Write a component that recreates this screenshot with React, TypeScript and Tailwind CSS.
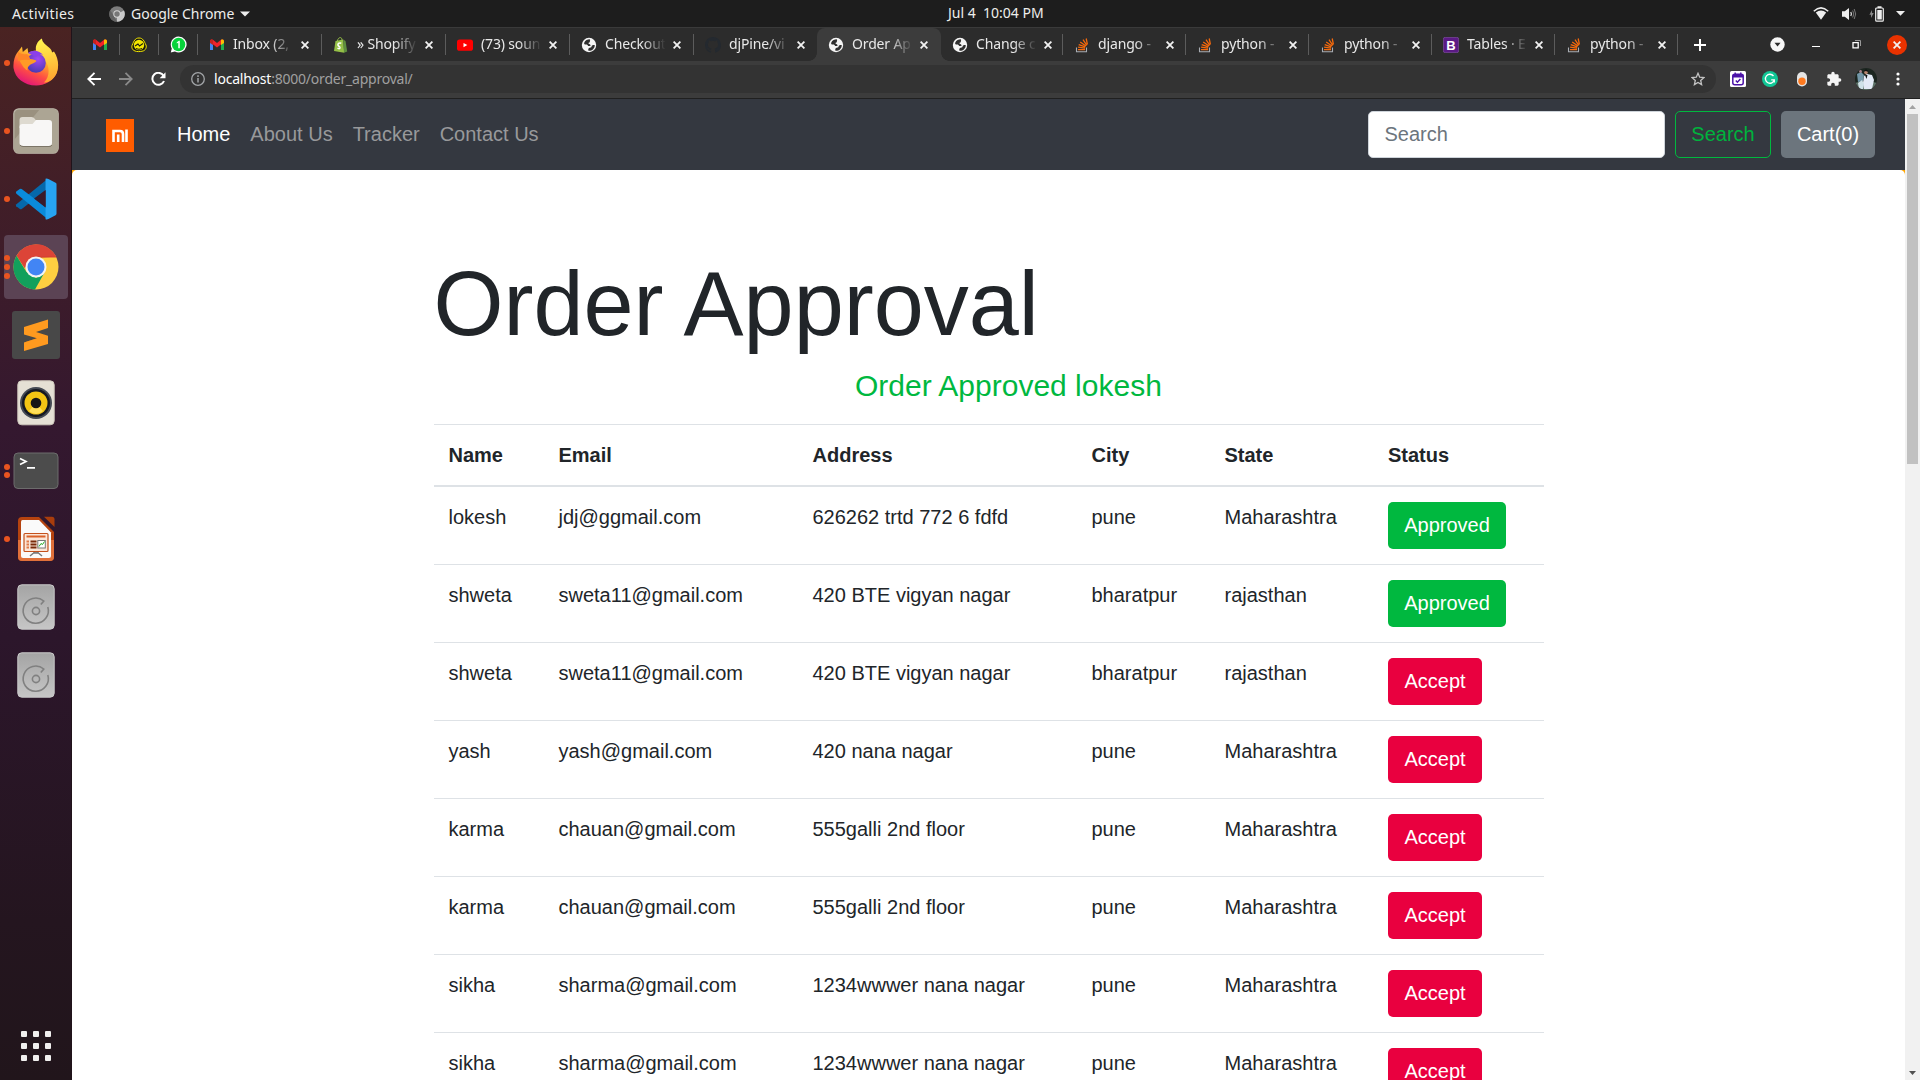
import React from "react";

type Favicon = "gmail" | "badge" | "whatsapp" | "shopify" | "youtube" | "globe" | "github" | "stack" | "bootstrap";

const Gmail = () => (
  <svg width="16" height="16" viewBox="0 0 16 16">
    <path d="M1 4v9h3V6z" fill="#4285f4" />
    <path d="M15 4v9h-3V6z" fill="#1fae4e" />
    <path d="M1 4.2C1 2.3 3 2 4.3 3L8 6l3.700-3C13 2 15 2.300 15 4.200L15 5 8 10.500 1 5z" fill="#f0232a" />
    <path d="M12 2.800C13.300 2 15 2.400 15 4.200V6l-3 2z" fill="#fbbc04" />
    <path d="M1 4.200C1 2.400 2.700 2 4 2.800V8L1 6z" fill="#c5221f" />
  </svg>
);

const Badge = () => (
  <svg width="16" height="16" viewBox="0 0 16 16" fill="none">
    <path d="M8 1C12 1 13 4 15 8c1 3-1 5.500-3 6-3 .800-6 .800-8 0C1 13 .300 10 1.200 8 3 4 4 1 8 1z" fill="#1b1b12" stroke="#f4e700" strokeWidth="1" />
    <circle cx="8" cy="8" r="5.200" fill="#f4e700" />
    <path d="M4 9l3-2 1.500 2L12 6.500M5 11.500c2 1 4 1 6 0" stroke="#1b1b12" strokeWidth="1.100" />
  </svg>
);

const Whatsapp = () => (
  <svg width="17" height="17" viewBox="0 0 17 17">
    <path d="M8.500.5a8 8 0 1 1-3.600 15.100L.8 16.500l1-4A8 8 0 0 1 8.500.5z" fill="#fff" />
    <circle cx="8.600" cy="8.500" r="6.700" fill="#07d33b" />
    <path d="M6.800 6.200L9 4.800h.8v7.400H8.300V6.600l-1.500.8z" fill="#fff" />
  </svg>
);

const Shopify = () => (
  <svg width="16" height="16" viewBox="0 0 16 16">
    <path d="M2.500 4l7.700-1.400 1 13.200L1 14z" fill="#95bf47" />
    <path d="M10.200 2.600l2.300 1.500 1.700 10.400-3.200 1.300z" fill="#5e8e3e" />
    <path d="M4.300 4C4.800 1.800 6 .6 7.300.6c1.200 0 1.700 1 1.700 2.600" fill="none" stroke="#95bf47" />
    <path d="M8.300 6.300C5.800 5.400 4.600 7 5 8.200c.4 1.200 2.200 1.400 2 2.700-.2 1-1.600.9-2.500.1" fill="none" stroke="#fff" strokeWidth="1.500" />
  </svg>
);

const Youtube = () => (
  <svg width="16" height="16" viewBox="0 0 16 16">
    <rect x="0" y="2.500" width="16" height="11.300" rx="2.600" fill="#f00" />
    <path d="M6.500 5.900v4.400l3.800-2.200z" fill="#fff" />
  </svg>
);

const Globe = () => (
  <svg width="16" height="16" viewBox="0 0 16 16">
    <circle cx="8" cy="8" r="7.200" fill="#f5f5f5" />
    <path d="M8.600 2.200c-2 0-4.400 1.100-5.300 3.300-.6 1.400.2 2 1.400 2 1.300-.1 2.300.5 2.400 1.500h2.300c.4-1-.2-1.700-1.200-2-.9-.3-.9-1.300 0-1.500 1.200-.2.300-1.700 1-2.600zM13.800 8.200c-1.500-.5-3 0-3.200 1.300-.2 1.200-1.700.9-2.600 1.600-.7.600-1 1.700-.5 2.700 3.500.3 6.300-2.400 6.300-5.600z" fill="#2f2f2f" />
  </svg>
);

const Github = () => (
  <svg width="16" height="16" viewBox="0 0 16 16" fill="#24292f">
    <path d="M8 0C3.580 0 0 3.580 0 8c0 3.540 2.290 6.530 5.470 7.590.4.070.55-.17.55-.38 0-.19-.01-.82-.01-1.490-2.010.37-2.530-.49-2.690-.94-.09-.23-.48-.94-.82-1.130-.28-.15-.68-.52-.01-.53.63-.01 1.080.58 1.230.82.72 1.210 1.870.87 2.330.66.07-.52.28-.87.51-1.070-1.780-.2-3.640-.89-3.640-3.950 0-.87.31-1.590.82-2.150-.08-.2-.36-1.020.08-2.120 0 0 .67-.21 2.200.82a7.600 7.600 0 0 1 4 0c1.530-1.040 2.200-.82 2.200-.82.44 1.100.16 1.920.08 2.120.51.56.82 1.270.82 2.150 0 3.070-1.870 3.750-3.650 3.950.29.25.54.73.54 1.480 0 1.070-.01 1.930-.01 2.200 0 .21.15.46.55.38A8 8 0 0 0 16 8c0-4.420-3.580-8-8-8z" />
  </svg>
);

const Stack = () => (
  <svg width="16" height="16" viewBox="0 0 16 16" fill="none">
    <path d="M2.500 10.500v4.200h10v-4.200" stroke="#a9adb3" strokeWidth="1.100" />
    <path d="M4 12.700h7M4.100 10.200l7 .9M4.700 7.600l6.600 2.200M6.200 5l5.800 4M9 2.700l3.800 5.600M12.200 1.500l1.200 6" stroke="#f5690c" strokeWidth="1.300" />
  </svg>
);

const BootstrapIcon = () => (
  <svg width="16" height="16" viewBox="0 0 16 16">
    <rect x=".3" y=".3" width="15.400" height="15.400" rx="2" fill="#5b1a85" stroke="#80559c" strokeWidth=".7" />
    <text x="8" y="12.600" textAnchor="middle" fontFamily="Liberation Sans, sans-serif" fontWeight="700" fontSize="13" fill="#fff">B</text>
  </svg>
);

const favicons: Record<Favicon, () => React.ReactElement> = {
  gmail: Gmail,
  badge: Badge,
  whatsapp: Whatsapp,
  shopify: Shopify,
  youtube: Youtube,
  globe: Globe,
  github: Github,
  stack: Stack,
  bootstrap: BootstrapIcon,
};

const Cross = () => (
  <svg width="8" height="8" viewBox="0 0 8 8" stroke="#f2f2f2" strokeWidth="1.800">
    <path d="M.6.6l6.800 6.800M7.400.6L.6 7.400" />
  </svg>
);

const tabs: { icon: Favicon; title: string; width: number; active?: boolean }[] = [
  { icon: "gmail", title: "Inbox (2,", width: 124 },
  { icon: "shopify", title: "» Shopify", width: 124 },
  { icon: "youtube", title: "(73) soun", width: 124 },
  { icon: "globe", title: "Checkout", width: 124 },
  { icon: "github", title: "djPine/vi", width: 123 },
  { icon: "globe", title: "Order Ap", width: 124, active: true },
  { icon: "globe", title: "Change c", width: 122 },
  { icon: "stack", title: "django -", width: 123 },
  { icon: "stack", title: "python -", width: 123 },
  { icon: "stack", title: "python -", width: 123 },
  { icon: "bootstrap", title: "Tables · E", width: 123 },
  { icon: "stack", title: "python -", width: 123 },
];

function TabStrip() {
  return (
    <div className="flex h-[34px] items-center border-t border-[#3a3a3a] bg-[#2c2c2c]">
      <div className="flex items-center pl-[9px]">
        {(["gmail", "badge", "whatsapp"] as Favicon[]).map((name) => {
          const Icon = favicons[name];
          return (
            <div key={name} className="flex h-[21px] w-[39px] items-center justify-center border-r border-[#5c5c5c]">
              <Icon />
            </div>
          );
        })}
      </div>
      {tabs.map((tab, i) => {
        const Icon = favicons[tab.icon];
        const bordered = !tab.active && tabs[i + 1]?.active !== true;
        return (
          <div
            key={i}
            style={{ width: tab.width }}
            className={
              "relative flex shrink-0 items-center " +
              (tab.active ? "h-[33px] rounded-t-lg bg-[#3c3c3c]" : "h-[21px]") +
              (bordered ? " border-r border-[#5c5c5c]" : "")
            }
          >
            {tab.active && (
              <>
                <span className="absolute bottom-0 -left-2 size-2 bg-[radial-gradient(circle_at_0_0,transparent_7.500px,#3c3c3c_8px)]" />
                <span className="absolute -right-2 bottom-0 size-2 bg-[radial-gradient(circle_at_100%_0,transparent_7.500px,#3c3c3c_8px)]" />
              </>
            )}
            <div className="ml-[11px] flex w-4 shrink-0 justify-center">
              <Icon />
            </div>
            <div className="-mt-[2px] ml-2 w-[62px] shrink-0 text-[14px] leading-5 tracking-[-0.15px] whitespace-pre text-[#e8e8e8] [mask-image:linear-gradient(to_right,black_60%,transparent_98%)]">
              {tab.title}
            </div>
            <div className="ml-[6px]">
              <Cross />
            </div>
          </div>
        );
      })}
      <svg className="ml-[15px]" width="14" height="14" viewBox="0 0 14 14" stroke="#fff" strokeWidth="2">
        <path d="M7 1v12M1 7h12" />
      </svg>
      <svg className="ml-[63px]" width="15" height="15" viewBox="0 0 15 15">
        <circle cx="7.500" cy="7.500" r="7.200" fill="#f7f7f7" />
        <path d="M4.500 5.800h6L7.500 9.600z" fill="#2c2c2c" />
      </svg>
      <div className="mt-1 ml-[27px] h-px w-2 bg-white" />
      <svg className="ml-[32px]" width="9" height="9" viewBox="0 0 9 9" fill="none">
        <path d="M3 .5h5.500V6" stroke="#9a9a9a" />
        <path d="M1 2.700h5.200v5.200H1z" stroke="#fff" strokeWidth="1.300" />
      </svg>
      <div className="ml-[26px] flex size-5 items-center justify-center rounded-full bg-[#e93200]">
        <Cross />
      </div>
    </div>
  );
}

function Toolbar() {
  return (
    <div className="flex h-[38px] items-center border-b border-[#202020] bg-[#3c3c3c] pb-px">
      <svg className="ml-[15px]" width="14" height="14" viewBox="0 0 14 14" fill="none" stroke="#fff" strokeWidth="1.900">
        <path d="M14 7H1.500M7.500.8L1.300 7l6.200 6.200" />
      </svg>
      <svg className="ml-[18px]" width="14" height="14" viewBox="0 0 14 14" fill="none" stroke="#8a8a8a" strokeWidth="1.800">
        <path d="M0 7h12.500M6.500.8L12.700 7l-6.200 6.200" />
      </svg>
      <svg className="ml-[18px]" width="15" height="14" viewBox="0 0 15 14" fill="none" stroke="#fff" strokeWidth="2">
        <path d="M12.700 4A6 6 0 1 0 13 9" />
        <path d="M14.500.2v6H8.700z" fill="#fff" stroke="none" />
      </svg>
      <div className="ml-[14px] flex h-7 w-[1536px] items-center rounded-full bg-[#333]">
        <svg className="ml-[11px]" width="14" height="14" viewBox="0 0 14 14" fill="none" stroke="#a2a5a8">
          <circle cx="7" cy="7" r="6.300" strokeWidth="1.300" />
          <path d="M7 6v4.500M7 3.300v1.600" strokeWidth="1.500" />
        </svg>
        <div className="-mt-px ml-[9px] flex-1 text-[14px] tracking-[-0.22px] text-[#a0a0a0]">
          <span className="text-white">localhost</span>:8000/order_approval/
        </div>
        <svg className="mr-[11px]" width="14" height="14" viewBox="0 0 14 14" fill="none" stroke="#c4c4c4" strokeWidth="1.300">
          <path d="M7 1.300l1.700 3.900 4.200.4-3.200 2.800.9 4.200L7 10.400l-3.600 2.200.9-4.200L1.100 5.600l4.200-.4z" />
        </svg>
      </div>
      <svg className="ml-[14px]" width="16" height="16" viewBox="0 0 16 16" fill="none">
        <rect width="16" height="16" rx="1.500" fill="#fff" />
        <rect x="2.800" y="3.200" width="10.400" height="10.600" rx="2" stroke="#4c14a8" strokeWidth="1.500" />
        <path d="M2.500 3.800h11v2.700h-11zM4.500 1.500h1.400v2H4.500zM10.100 1.500h1.400v2h-1.400z" fill="#4c14a8" />
        <path d="M5.800 9.500l1.600 1.700 3-3.200" stroke="#4c14a8" strokeWidth="1.500" />
      </svg>
      <svg className="ml-4" width="16" height="16" viewBox="0 0 16 16" fill="none">
        <circle cx="8" cy="8" r="8" fill="#11c796" />
        <path d="M11.500 5A4.500 4.500 0 1 0 12.300 8.800H9.200M12.300 8.800v2.700" stroke="#fff" strokeWidth="1.300" />
      </svg>
      <svg className="ml-4" width="16" height="16" viewBox="0 0 16 16">
        <rect x="3" y="1" width="10" height="14.500" rx="5" fill="#e4e4e4" />
        <circle cx="8" cy="10.300" r="3.700" fill="#ff7a1f" />
      </svg>
      <svg className="ml-4" width="16" height="16" viewBox="0 0 24 24" fill="#f5f5f5">
        <path d="M20.500 11H19V7c0-1.100-.9-2-2-2h-4V3.500a2.500 2.500 0 0 0-5 0V5H4c-1.100 0-1.990.9-1.990 2v3.800H3.500c1.490 0 2.700 1.210 2.700 2.700s-1.210 2.700-2.700 2.700H2V20c0 1.100.9 2 2 2h3.800v-1.500c0-1.490 1.210-2.700 2.700-2.700s2.700 1.210 2.700 2.700V22H17c1.100 0 2-.9 2-2v-4h1.500a2.500 2.500 0 0 0 0-5z" />
      </svg>
      <svg className="ml-[13px]" width="22" height="22" viewBox="0 0 22 22">
        <clipPath id="avatar">
          <circle cx="11" cy="11" r="11" />
        </clipPath>
        <g clipPath="url(#avatar)">
          <rect width="22" height="22" fill="#1c2620" />
          <path d="M0 15q10-4 22 0v7H0z" fill="#5d7268" />
          <path d="M2 6l4-2 3 3-1 6-5 1z" fill="#7397a8" />
          <path d="M9 8l3-2 5 1 2 5-2 9H9l-1-6z" fill="#e3eaf6" />
          <path d="M3 15l4-3 2 4-1 5H4z" fill="#cfe2e8" />
          <circle cx="11" cy="4.500" r="1.800" fill="#b88670" />
          <circle cx="5.500" cy="3.500" r="1.400" fill="#a8808a" />
          <path d="M9 3q2.500-3 4.500.5zM10 7l1.500 4 1-4z" fill="#111" />
        </g>
      </svg>
      <svg className="ml-[19px]" width="4" height="14" viewBox="0 0 4 14" fill="#fff">
        <circle cx="2" cy="2" r="1.600" />
        <circle cx="2" cy="7" r="1.600" />
        <circle cx="2" cy="12" r="1.600" />
      </svg>
    </div>
  );
}

function TopBar() {
  return (
    <div className="flex h-[27px] items-center bg-[#1d1d1d] text-[14px] text-[#eeeeec]">
      <div className="flex w-[948px] items-center">
        <span className="ml-3 w-[62px] tracking-[0.4px] whitespace-nowrap">Activities</span>
        <svg className="ml-[35px]" width="16" height="16" viewBox="0 0 16 16">
          <circle cx="8" cy="8" r="7.800" fill="#7c7c7c" />
          <path d="M8 8L15 4.500A7.800 7.800 0 0 1 8 15.800z" fill="#c9c9c9" />
          <path d="M1.200 4.300L5 10l3 5.800A7.800 7.800 0 0 1 1.200 4.300z" fill="#626262" />
          <circle cx="8" cy="8" r="3.700" fill="#d5d5d5" />
          <circle cx="8" cy="8" r="2.700" fill="#777" />
        </svg>
        <span className="ml-[6px] w-[104px] whitespace-nowrap">Google Chrome</span>
        <svg className="ml-[5px]" width="10" height="6" viewBox="0 0 10 6">
          <path d="M0 .5h10L5 5.500z" fill="#eee" />
        </svg>
      </div>
      <span className="-mt-[2px] whitespace-pre">Jul 4  10:04 PM</span>
      <div className="flex flex-1 items-center justify-end pr-[15px]">
        <svg width="16" height="14" viewBox="0 0 16 14">
          <path d="M.8 4.200Q8-2.500 15.200 4.200" fill="none" stroke="#eee" strokeWidth="1.500" />
          <path d="M2.800 5.600Q8 1.500 13.200 5.600L8 12.800z" fill="#eee" />
        </svg>
        <svg className="ml-[12px]" width="16" height="14" viewBox="0 0 16 14" fill="none">
          <path d="M1 4.200h2.800L8 1v12L3.800 9.800H1z" fill="#eee" />
          <path d="M9.800 5q1.200 2 0 4" stroke="#eee" strokeWidth="1.200" />
          <path d="M11.700 3.500q2.200 3.500 0 7M13.200 2q3 5 0 10" stroke="#777" />
        </svg>
        <svg className="ml-[12px]" width="15" height="16" viewBox="0 0 15 16" fill="none">
          <path d="M3 4v3h1.700L2 12V8.800H.4z" fill="#888" />
          <rect x="6.700" y="2" width="7.600" height="13.200" rx="1" stroke="#eee" strokeWidth="1.200" />
          <path d="M8.500.2h4V2h-4zM8.300 4h4.500v9.600H8.300z" fill="#eee" />
        </svg>
        <svg className="ml-[12px]" width="9" height="5" viewBox="0 0 9 5">
          <path d="M0 0h9L4.500 4.800z" fill="#eee" />
        </svg>
      </div>
    </div>
  );
}

const FirefoxIcon = () => (
  <svg className="-mt-[3px]" width="46" height="48" viewBox="0 0 46 48">
    <defs>
      <linearGradient id="ffBody" x1=".8" y1=".1" x2=".3" y2="1">
        <stop offset="0" stopColor="#fff04a" />
        <stop offset=".35" stopColor="#ffa32b" />
        <stop offset=".65" stopColor="#ff4f43" />
        <stop offset="1" stopColor="#e0127c" />
      </linearGradient>
      <linearGradient id="ffTail" x1=".5" y1="0" x2=".6" y2="1">
        <stop offset="0" stopColor="#fff44f" />
        <stop offset="1" stopColor="#ffa12e" />
      </linearGradient>
      <radialGradient id="ffCore" cx=".6" cy=".3" r=".7">
        <stop offset="0" stopColor="#a347f5" />
        <stop offset="1" stopColor="#4a3bb3" />
      </radialGradient>
    </defs>
    <path d="M4 15l5-6.500.8 5.500 4.700-4 .8 5c4-3 14-4 19-1l5 1c5 5 7 13 4 21-4 7-12 11.500-20 11.500C11 47.500 2 40 .5 30 0 23 2 18 4 15z" fill="url(#ffBody)" />
    <path d="M29 .5c0 4 4 6 7 9 2 2 3 3 3 5l2-1c6 9 5 20 0 26-3 4-7 5-10 5 6-6 6-16 1-22-3-4-8-5-9-10-1-5 2-10 6-12z" fill="url(#ffTail)" />
    <circle cx="23" cy="25" r="9.800" fill="url(#ffCore)" />
    <path d="M15 15c5-4 12-2 15 2-4-1-6 0-7 2z" fill="#8b3fe8" />
    <path d="M5 20c6-3 9-1 12 1 3 0 6 1 6.500 2-1 1.500-4 2.500-6 3.500-2 1.500-3.500 3-3 6-4-2-5.500-6-9.500-12.500z" fill="#ff9a26" />
    <path d="M5 14q4 3 9 2 3 2 3 6-6-1-12 1z" fill="#ff8427" />
  </svg>
);

const FilesIcon = () => (
  <svg width="46" height="46" viewBox="0 0 46 46">
    <rect x=".8" y=".8" width="44.400" height="44.400" rx="5" fill="#9a917f" stroke="#bdb8aa" strokeWidth="1.200" />
    <path d="M27 1h13q5 0 5 5v34q0 5-5 5H6q-5 0-5-5v-8z" fill="#aca594" />
    <path d="M6.500 12q0-3 3-3h9q2 0 3 1.500l2 2.500V20h-17z" fill="#dedad0" />
    <path d="M6.500 19q0-3 3-3h10l3.500-4h13q3 0 3 3v20q0 3-3 3h-26q-3.500 0-3.500-3z" fill="#f8f7f6" />
    <path d="M7 37q1 1.500 3 1.500h26q2.500 0 3-1.500" stroke="#7c7567" fill="none" />
  </svg>
);

const CodeIcon = () => (
  <svg width="42" height="42" viewBox="0 0 44 44">
    <path d="M1.300 29.500l3.800 3q1 .6 2 0L34 11.500V1L1.500 27.500q-1 1-.2 2z" fill="#0668aa" />
    <path d="M7 11.500L34 32v11L1.500 16.500q-1-1.300-.2-2.300L5 11.400q1-.5 2 .1z" fill="#0a8bdb" />
    <path d="M32 .8q1.500-.5 3 .3L42.500 5q1 .5 1 1.500v31q0 1-1 1.500L35 43q-1.500.8-3 .2z" fill="#27a4f2" />
    <path d="M32 12.500v18.500L20 21.500z" fill="#3a1a29" />
  </svg>
);

const ChromeIcon = () => (
  <svg width="46" height="46" viewBox="0 0 46 46">
    <circle cx="23" cy="23" r="22.500" fill="#fecf41" />
    <path d="M3.500 11.700A22.500 22.500 0 0 1 43.600 13.500H23L11.500 24z" fill="#dc4437" />
    <path d="M3.500 11.700A22.500 22.500 0 0 0 22 45.500L31.500 28.500 23 34 13.500 28z" fill="#12a05c" />
    <path d="M23 12.500h20L26 14z" fill="#c0392f" opacity=".5" />
    <circle cx="23" cy="23" r="10.500" fill="#f4f4f4" />
    <circle cx="23" cy="23" r="8.500" fill="#4285f4" />
  </svg>
);

const SublimeIcon = () => (
  <svg width="48" height="48" viewBox="0 0 48 48">
    <rect width="48" height="48" rx="3" fill="#484848" />
    <path d="M12 31.500l13-4.300 8 4-8 3z" fill="#cc7312" />
    <path d="M12 16L36 8.500v8.500l-12 4 12 3.700v8.200L12 40v-8.500l13-4.300L12 23.500z" fill="#ff9a1f" />
  </svg>
);

const MusicIcon = () => (
  <svg width="38" height="46" viewBox="0 0 38 46">
    <rect x=".8" y=".8" width="36.400" height="44" rx="4" fill="#e5e0d5" stroke="#cdc7bb" />
    <circle cx="19" cy="23" r="16" fill="#454a54" />
    <circle cx="19" cy="23" r="14" fill="#151922" />
    <circle cx="19" cy="23" r="11.500" fill="#f2c414" />
    <path d="M12 31l7-8 7 8q-7 6-14 0z" fill="#ffdf5a" />
    <circle cx="19" cy="23" r="5.300" fill="#161616" />
  </svg>
);

const TerminalIcon = () => (
  <svg width="46" height="38" viewBox="0 0 46 38">
    <rect x="1" y="1" width="44" height="35.500" rx="4" fill="#4c4c4c" stroke="#6c6c6c" />
    <path d="M7 6.500l6 3-6 3M14 15.800h8" fill="none" stroke="#fff" strokeWidth="1.700" />
  </svg>
);

const ImpressIcon = () => (
  <svg width="38" height="46" viewBox="0 0 38 46">
    <path d="M5 1h17l15 15v25q0 4-4 4H5q-4 0-4-4V5q0-4 4-4z" fill="#b5430f" />
    <path d="M1 24h36v17q0 4-4 4H5q-4 0-4-4z" fill="#e0703a" />
    <path d="M5.500 4H22l12 12.500V40q0 2-2 2H6q-2 0-2-2V6q0-2 1.500-2z" fill="#fafafa" />
    <path d="M27 .8h8q2.500 0 2.500 2.500V11z" fill="#a93d0c" />
    <path d="M19 35l-6 5M19 35l6 5M16 37h6" stroke="#777" strokeWidth="1.500" />
    <rect x="7" y="17.500" width="24" height="18" rx="1" fill="#fbe6d8" stroke="#c4511c" strokeWidth="1.200" />
    <path d="M9.500 20.500h19" stroke="#d9622a" strokeWidth="2" />
    <path d="M9.500 25.500h2.500M9.500 28.500h2.500M9.500 31.500h2.500" stroke="#e07a48" strokeWidth="1.800" />
    <path d="M13.500 25.500h6M13.500 28.500h6M13.500 31.500h6" stroke="#782a0b" strokeWidth="1.800" />
    <rect x="20.800" y="24.500" width="7.500" height="7.500" fill="#fff" stroke="#777" />
    <path d="M22 30.500l2-3 1.500 1 2-3" stroke="#24a822" fill="none" />
  </svg>
);

const DiskIcon = () => (
  <svg width="38" height="46" viewBox="0 0 38 46">
    <defs>
      <linearGradient id="disk" x1="0" y1="0" x2="0" y2="1">
        <stop offset="0" stopColor="#a4a4a4" />
        <stop offset="1" stopColor="#c6c6c6" />
      </linearGradient>
    </defs>
    <rect x=".8" y=".8" width="36.400" height="44.400" rx="4" fill="url(#disk)" stroke="#c8c8c8" />
    <g fill="none" stroke="#808080" strokeWidth="1.600">
      <path d="M30.800 23a12.600 12.600 0 1 1-4-6l-3 3.500" />
      <circle cx="19" cy="27" r="3.600" />
    </g>
  </svg>
);

const dockItems: { Icon: () => React.ReactElement; dots: number; active?: boolean }[] = [
  { Icon: FirefoxIcon, dots: 1 },
  { Icon: FilesIcon, dots: 1 },
  { Icon: CodeIcon, dots: 1 },
  { Icon: ChromeIcon, dots: 3, active: true },
  { Icon: SublimeIcon, dots: 0 },
  { Icon: MusicIcon, dots: 0 },
  { Icon: TerminalIcon, dots: 2 },
  { Icon: ImpressIcon, dots: 1 },
  { Icon: DiskIcon, dots: 0 },
  { Icon: DiskIcon, dots: 0 },
];

function Dock() {
  return (
    <div className="flex w-[72px] shrink-0 flex-col justify-between border-r border-[#20131a] bg-[linear-gradient(to_bottom,#4a2322_0%,#3f1d29_20%,#34182f_38%,#2c162b_58%,#24151f_85%,#21151b_100%)] pt-1">
      <div className="flex flex-col gap-1">
        {dockItems.map(({ Icon, dots, active }, i) => (
          <div
            key={i}
            className={"relative ml-1 flex size-16 items-center justify-center rounded " + (active ? "bg-[#5b4354]" : "")}
          >
            <div className="absolute top-0 left-0 flex h-full flex-col items-center justify-center gap-[2.700px]">
              {Array.from({ length: dots }, (_, d) => (
                <span key={d} className="size-[6px] rounded-full bg-[#e95420]" />
              ))}
            </div>
            <Icon />
          </div>
        ))}
      </div>
      <div className="mb-[19px] ml-[21px] grid w-[30px] grid-cols-3 gap-[6px]">
        {Array.from({ length: 9 }, (_, i) => (
          <span key={i} className="size-[6px] rounded-[1px] bg-[#f0efee]" />
        ))}
      </div>
    </div>
  );
}

function Navbar() {
  return (
    <nav className="flex h-[71px] items-center bg-[#343840] text-[20px] text-[#98999b]">
      <svg className="mt-[2px] ml-[34px]" width="28" height="33" viewBox="0 0 28 33">
        <rect width="28" height="33" fill="#ff5c00" />
        <path d="M7.500 23V12h6.500q3 0 3 3v8M12.200 15.500V23M20.500 10.600V23" fill="none" stroke="#fff" strokeWidth="2.600" />
      </svg>
      <div className="-mt-[2px] ml-[43px] flex flex-1 gap-5">
        <span className="text-white">Home</span>
        <span>About Us</span>
        <span>Tracker</span>
        <span>Contact Us</span>
      </div>
      <div className="mr-[30px] flex gap-[10px] *:pb-[2px]">
        <div className="flex h-[47px] w-[297px] items-center rounded-[5px] border border-[#ced4da] bg-white pl-[15.500px] text-[#6c757d]">Search</div>
        <div className="flex h-[47px] w-24 items-center justify-center rounded-[5px] border border-[#00b83f] text-[#00b23d]">Search</div>
        <div className="flex h-[47px] w-[94px] items-center justify-center rounded-[5px] bg-[#6c757d] text-white">Cart(0)</div>
      </div>
    </nav>
  );
}

const orders = [
  ["lokesh", "jdj@ggmail.com", "626262 trtd 772 6 fdfd", "pune", "Maharashtra", "Approved"],
  ["shweta", "sweta11@gmail.com", "420 BTE vigyan nagar", "bharatpur", "rajasthan", "Approved"],
  ["shweta", "sweta11@gmail.com", "420 BTE vigyan nagar", "bharatpur", "rajasthan", "Accept"],
  ["yash", "yash@gmail.com", "420 nana nagar", "pune", "Maharashtra", "Accept"],
  ["karma", "chauan@gmail.com", "555galli 2nd floor", "pune", "Maharashtra", "Accept"],
  ["karma", "chauan@gmail.com", "555galli 2nd floor", "pune", "Maharashtra", "Accept"],
  ["sikha", "sharma@gmail.com", "1234wwwer nana nagar", "pune", "Maharashtra", "Accept"],
  ["sikha", "sharma@gmail.com", "1234wwwer nana nagar", "pune", "Maharashtra", "Accept"],
];

const rowGrid = "grid grid-cols-[110px_254px_279px_133px_163.500px_170.500px] text-[20px] leading-[30px] *:pl-[14.500px]";

function Orders() {
  return (
    <main className="h-[910px] overflow-hidden bg-white pt-20 pl-[362px] text-[#212529]">
      <h1 className="-ml-[0.500px] text-[90px] leading-[108px] font-light">Order Approval</h1>
      <p className="mt-[5px] ml-[421px] text-[30px] leading-[45px] text-[#00b83f]">Order Approved lokesh</p>
      <div className="mt-4 w-[1110px]">
        <div className={rowGrid + " border-t border-b-2 border-t-[#dee2e6] border-b-[#dee2e6] py-[15px] font-bold"}>
          {["Name", "Email", "Address", "City", "State", "Status"].map((h) => (
            <div key={h}>{h}</div>
          ))}
        </div>
        {orders.map((row, i) => (
          <div key={i} className={rowGrid + " border-b border-[#dee2e6] py-[15px]"}>
            {row.slice(0, 5).map((cell, c) => (
              <div key={c}>{cell}</div>
            ))}
            <div>
              <button
                className={
                  "flex h-[47px] items-center justify-center rounded-[5px] pb-[2px] text-white " +
                  (row[5] === "Approved" ? "w-[118px] bg-[#00b83f]" : "w-[94px] bg-[#e9003f]")
                }
              >
                {row[5]}
              </button>
            </div>
          </div>
        ))}
      </div>
    </main>
  );
}

function Scrollbar() {
  return (
    <div className="flex w-[15px] shrink-0 flex-col items-center bg-[#f1f1f1]">
      <svg width="15" height="15" viewBox="0 0 15 15">
        <path d="M4 10h7L7.500 6z" fill="#a3a3a3" />
      </svg>
      <div className="h-[350px] w-[11px] bg-[#c1c1c1]" />
      <svg className="mt-auto" width="15" height="15" viewBox="0 0 15 15">
        <path d="M4 6h7l-3.500 4z" fill="#505050" />
      </svg>
    </div>
  );
}

export default function App() {
  return (
    <div className="flex h-[1080px] w-[1920px] flex-col overflow-hidden bg-white font-['Liberation_Sans',sans-serif]">
      <div className="font-['Noto_Sans',sans-serif]">
        <TopBar />
      </div>
      <div className="flex min-h-0 flex-1">
        <Dock />
        <div className="flex min-w-0 flex-1 flex-col">
          <div className="font-['Noto_Sans',sans-serif]">
            <TabStrip />
            <Toolbar />
          </div>
          <div className="flex min-h-0 flex-1">
            <div className="flex-1 bg-[#ffa500]">
              <Navbar />
              <div className="overflow-hidden rounded-t-[5px]">
                <Orders />
              </div>
            </div>
            <Scrollbar />
          </div>
        </div>
      </div>
    </div>
  );
}
